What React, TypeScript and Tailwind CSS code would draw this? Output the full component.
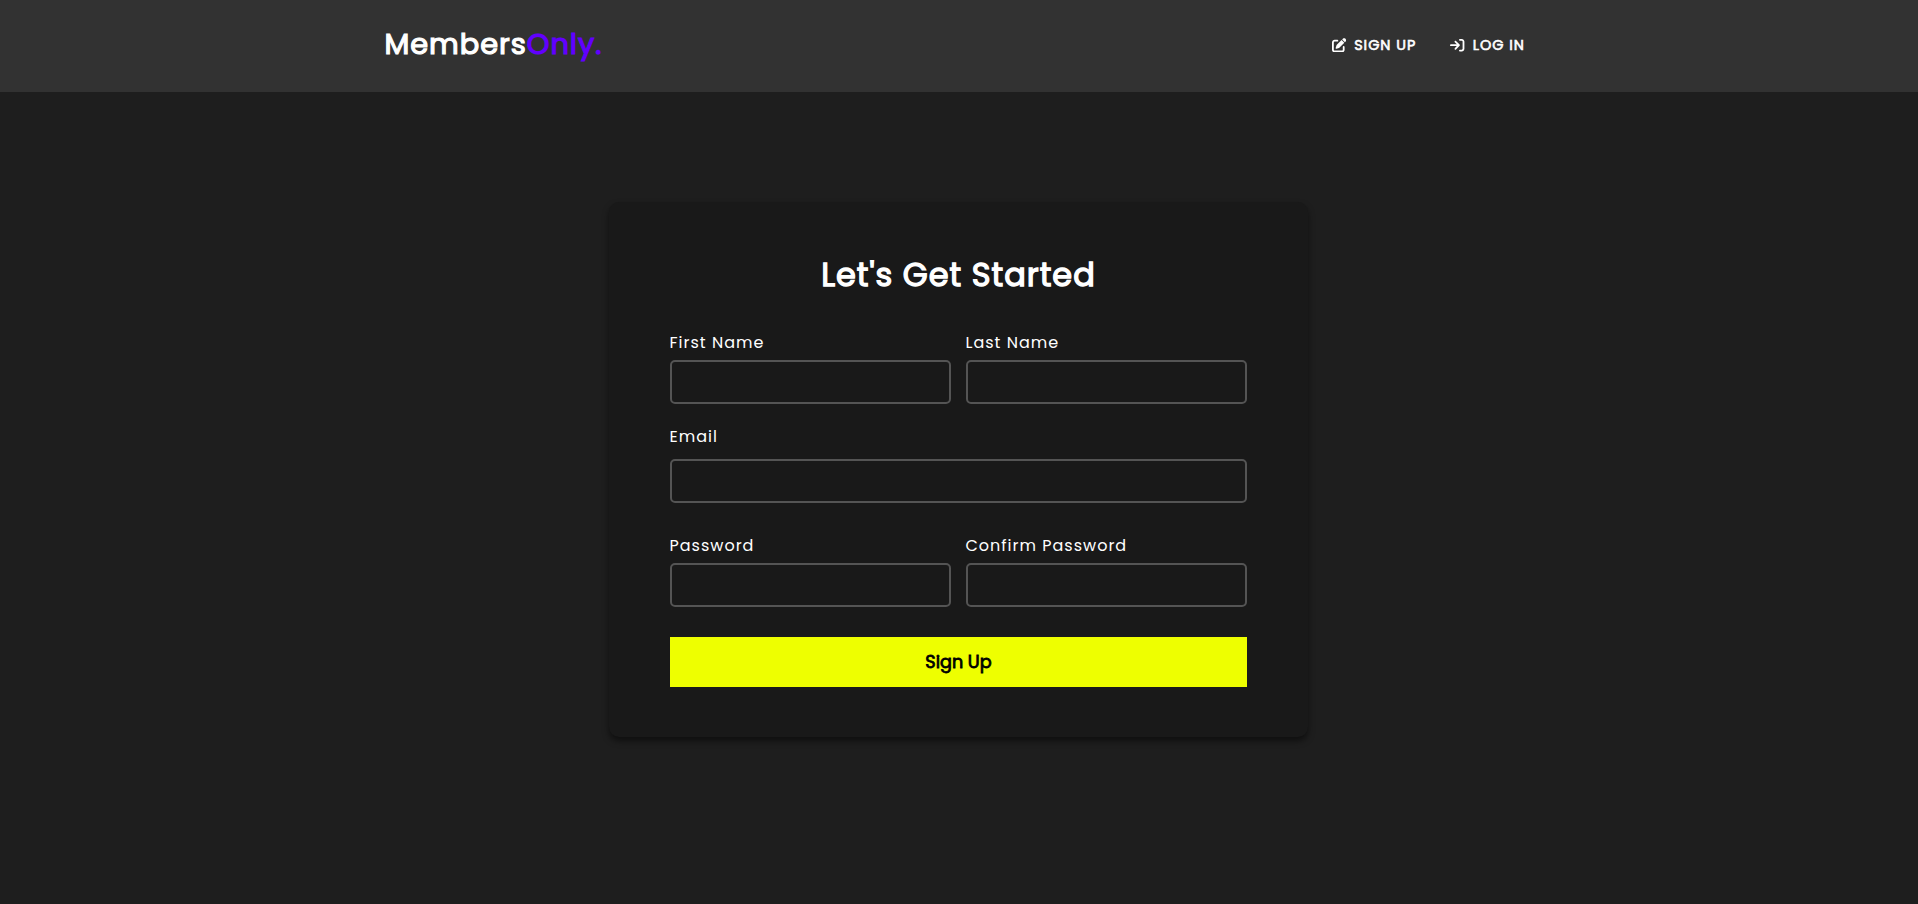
import { FaPenToSquare, FaArrowRightToBracket } from "react-icons/fa6";

function Field({ label, type = "text", gap }: { label: string; type?: string; gap: string }) {
  return (
    <label className={`flex min-w-0 flex-1 flex-col ${gap}`}>
      <span className="text-base leading-[26px] tracking-[1px] whitespace-nowrap">{label}</span>
      <input type={type} className="h-11 w-full rounded-[5px] border-2 border-[#545454] bg-transparent px-3 outline-none" />
    </label>
  );
}

export default function App() {
  return (
    <div className="flex min-h-screen flex-col bg-[#1e1e1e] font-[Poppins,Inter,sans-serif] text-white">
      <header className="flex h-[92px] justify-between bg-[#323232] pr-[393px] pl-[384.4px]">
        <div className="flex pt-6 text-[28.8px] leading-10 tracking-[1px] [-webkit-text-stroke:1.2px_currentColor]">
          <span>Members</span>
          <span className="text-[#6200ff]">Only.</span>
        </div>
        <nav className="flex h-[90px] items-center gap-[34px] text-[14.4px] tracking-[1px] [-webkit-text-stroke:0.6px_currentColor]">
          <a className="flex items-center gap-2">
            <FaPenToSquare className="size-[14.4px]" />
            <span className="pt-0.5 whitespace-nowrap">SIGN UP</span>
          </a>
          <a className="flex items-center gap-2">
            <FaArrowRightToBracket className="size-[14.4px]" />
            <span className="pt-0.5 whitespace-nowrap">LOG IN</span>
          </a>
        </nav>
      </header>
      <main className="flex justify-center pt-[110px] pr-0.5">
        <form className="flex h-[535px] w-[699px] flex-col rounded-[10px] bg-[#191919] px-[61px] pt-[50px] shadow-[0_4px_6px_rgba(0,0,0,0.5)]">
          <h1 className="pl-px text-center text-[32px] leading-[46px] tracking-[1px] [-webkit-text-stroke:1.3px_currentColor]">Let's Get Started</h1>
          <div className="mt-[32px] flex gap-[15px]">
            <Field label="First Name" gap="gap-1" />
            <Field label="Last Name" gap="gap-1" />
          </div>
          <div className="mt-[20px] flex">
            <Field label="Email" type="email" gap="gap-[9px]" />
          </div>
          <div className="mt-[30px] flex gap-[15px]">
            <Field label="Password" type="password" gap="gap-1" />
            <Field label="Confirm Password" type="password" gap="gap-1" />
          </div>
          <button type="button" className="mt-[30px] h-[50px] bg-[#eeff00] pl-px text-[17.6px] text-black [-webkit-text-stroke:0.8px_currentColor]">Sign Up</button>
        </form>
      </main>
    </div>
  );
}
